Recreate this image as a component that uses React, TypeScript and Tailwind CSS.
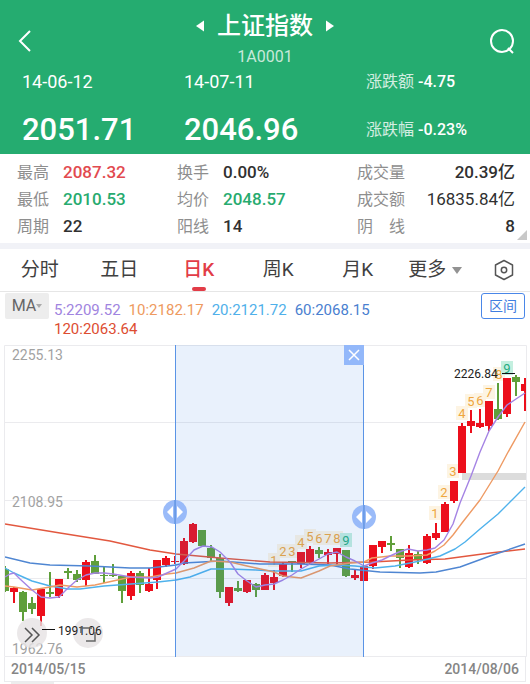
type Candle = [color: "r" | "g", high: number, top: number, bottom: number, low: number];
type Point = [x: number, y: number];

const STEP = 8.97;
const RED = "#ec0f1c";
const GREEN = "#5f9f3a";

const candles: Candle[] = [
  ["g", 566, 569, 591, 592], ["r", 587, 588, 592, 603], ["g", 591, 592, 612, 621],
  ["g", 597, 603, 609, 614], ["r", 589, 589, 616, 626], ["g", 572, 592, 594, 597],
  ["r", 579, 579, 596, 598], ["g", 568, 571, 573, 579], ["g", 570, 574, 580, 582],
  ["r", 560, 562, 580, 586], ["g", 555, 561, 574, 574], ["g", 566, 575, 576, 583],
  ["g", 564, 575, 576, 577], ["g", 575, 576, 591, 603], ["r", 571, 573, 596, 600],
  ["g", 571, 573, 585, 593], ["r", 568, 584, 591, 592], ["r", 560, 560, 580, 589],
  ["r", 556, 558, 565, 567], ["r", 556, 561, 562, 564], ["r", 538, 541, 564, 565],
  ["r", 523, 524, 542, 543], ["g", 530, 530, 546, 547], ["g", 545, 548, 558, 561],
  ["g", 554, 558, 592, 598], ["r", 587, 587, 603, 606], ["g", 581, 588, 591, 592],
  ["r", 580, 580, 592, 593], ["g", 583, 584, 590, 597], ["r", 573, 575, 590, 590],
  ["r", 570, 577, 583, 590], ["r", 562, 564, 576, 577], ["g", 561, 561, 562, 572],
  ["r", 552, 552, 564, 568], ["r", 546, 549, 562, 565], ["g", 547, 550, 554, 558],
  ["r", 549, 552, 555, 564], ["r", 548, 548, 554, 567], ["g", 550, 550, 576, 577],
  ["r", 569, 575, 578, 580], ["r", 566, 566, 581, 581], ["r", 545, 545, 566, 569],
  ["r", 541, 541, 547, 553], ["g", 536, 543, 545, 551], ["g", 549, 549, 558, 568],
  ["r", 545, 553, 567, 568], ["g", 551, 554, 560, 564], ["r", 534, 536, 563, 564],
  ["r", 523, 533, 538, 540], ["r", 502, 504, 532, 532], ["r", 481, 481, 501, 503],
  ["r", 423, 426, 473, 473], ["r", 410, 421, 426, 433], ["r", 409, 423, 427, 428],
  ["r", 401, 401, 426, 431], ["g", 383, 409, 419, 420], ["r", 378, 378, 414, 417],
  ["g", 375, 377, 382, 396], ["r", 378, 384, 391, 411],
];

const averages: { label: string; color: string; text: string; points: Point[] }[] = [
  {
    label: "120:2063.64",
    color: "#e2583f",
    text: "text-[#dd4d31]",
    points: [[5, 524], [60, 533], [110, 541], [150, 550], [176, 554], [220, 558], [270, 562], [330, 563], [372, 562], [410, 560], [445, 559], [490, 553], [525, 549]],
  },
  {
    label: "60:2068.15",
    color: "#4f86d2",
    text: "text-[#4a80d0]",
    points: [[5, 557], [30, 563], [50, 565], [90, 566], [130, 568], [150, 568], [176, 565], [184, 563], [220, 561], [260, 564], [300, 564], [330, 565], [350, 569], [380, 572], [420, 573], [436, 572], [460, 567], [490, 556], [525, 544]],
  },
  {
    label: "20:2121.72",
    color: "#4fb2ec",
    text: "text-[#4fb0ea]",
    points: [[5, 568], [14, 573], [32, 581], [50, 586], [68, 589], [80, 589], [104, 586], [131, 584], [158, 582], [176, 580], [190, 577], [211, 569], [230, 569], [256, 570], [274, 571], [301, 571], [319, 566], [337, 565], [355, 566], [375, 568], [395, 566], [420, 561], [440, 556], [455, 549], [465, 542], [480, 529], [498, 514], [512, 500], [525, 487]],
  },
  {
    label: "10:2182.17",
    color: "#ee9a63",
    text: "text-[#ee9a60]",
    points: [[5, 586], [14, 587], [32, 590], [50, 587], [60, 585], [77, 587], [95, 585], [113, 581], [122, 579], [131, 577], [150, 577], [167, 574], [176, 573], [194, 568], [211, 561], [230, 562], [247, 566], [256, 568], [274, 572], [283, 576], [301, 578], [319, 571], [330, 566], [350, 563], [364, 562], [372, 558], [390, 556], [408, 556], [427, 555], [435, 551], [444, 545], [453, 535], [462, 523], [480, 500], [498, 471], [507, 454], [525, 422]],
  },
  {
    label: "5:2209.52",
    color: "#a584e4",
    text: "text-[#a084e0]",
    points: [[5, 577], [10, 574], [14, 573], [20, 579], [32, 590], [41, 597], [50, 598], [59, 597], [68, 588], [77, 580], [86, 575], [95, 573], [104, 573], [113, 574], [131, 577], [150, 578], [158, 577], [167, 573], [176, 569], [184, 561], [194, 550], [203, 546], [212, 547], [220, 552], [230, 562], [238, 574], [247, 581], [256, 587], [265, 585], [274, 584], [283, 580], [292, 575], [301, 569], [310, 564], [319, 559], [328, 554], [337, 552], [346, 557], [355, 561], [364, 566], [372, 563], [382, 560], [390, 556], [399, 552], [408, 549], [418, 551], [427, 550], [435, 548], [444, 540], [453, 524], [460, 503], [471, 476], [480, 452], [489, 431], [498, 417], [507, 405], [516, 399], [525, 393]],
  },
];

// nine-turn counts, one list per run
const turns: Point[][] = [
  [[274, 560], [283, 551], [292, 551], [301, 542], [310, 536], [319, 538], [328, 538], [337, 538], [346, 540]],
  [[435, 513], [444, 492], [453, 471], [462, 413], [471, 401], [480, 400], [489, 392], [499, 374], [507, 368]],
];

const stats = [
  [
    { label: "最高", value: "2087.32", tone: "font-medium text-[#e24a4f]" },
    { label: "最低", value: "2010.53", tone: "font-medium text-[#27ab6f]" },
    { label: "周期", value: "22", tone: "font-medium text-[#303030]" },
  ],
  [
    { label: "换手", value: "0.00%", tone: "font-medium text-[#303030]" },
    { label: "均价", value: "2048.57", tone: "font-medium text-[#27ab6f]" },
    { label: "阳线", value: "14", tone: "font-medium text-[#303030]" },
  ],
  [
    { label: "成交量", value: "20.39亿", tone: "font-medium text-[#303030]" },
    { label: "成交额", value: "16835.84亿", tone: "text-[#303030]" },
    { label: "阴　线", value: "8", tone: "font-medium text-[#303030]" },
  ],
];

const tabs = ["分时", "五日", "日K", "周K", "月K"];

function Header() {
  return (
    <header className="bg-[#25ac70] pb-1 text-white">
      <div className="grid grid-cols-[48px_1fr_48px] items-center pt-[10px]">
        <button type="button" aria-label="返回" className="flex h-[62px] items-center pl-[18px]">
          <svg width="14" height="22" viewBox="0 0 14 22" fill="none" stroke="currentColor" strokeWidth="2">
            <path d="M12 1 2 11l10 10" />
          </svg>
        </button>
        <div className="flex flex-col items-center">
          <div className="flex items-center gap-3">
            <button type="button" aria-label="上一个">
              <svg width="9" height="12" viewBox="0 0 9 12" fill="currentColor"><path d="M8 .5v11L0 6z" /></svg>
            </button>
            <h1 className="text-2xl leading-8 font-medium">上证指数</h1>
            <button type="button" aria-label="下一个">
              <svg width="9" height="12" viewBox="0 0 9 12" fill="currentColor"><path d="M1 .5v11L9 6z" /></svg>
            </button>
          </div>
          <p className="text-base leading-[30px] text-white/75">1A0001</p>
        </div>
        <button type="button" aria-label="搜索" className="flex h-[62px] items-center pl-[7px]">
          <svg width="26" height="26" viewBox="0 0 26 26" fill="none" stroke="currentColor" strokeWidth="2">
            <circle cx="13" cy="13" r="11" />
            <path d="m19 20 5 5" />
          </svg>
        </button>
      </div>
      <div className="grid grid-cols-[162px_182px_1fr] pl-[22px]">
        <div>
          <p className="text-lg leading-5">14-06-12</p>
          <p className="pt-[18px] text-[31px] leading-10 font-medium">2051.71</p>
        </div>
        <div>
          <p className="text-lg leading-5">14-07-11</p>
          <p className="pt-[18px] text-[31px] leading-10 font-medium">2046.96</p>
        </div>
        <div className="text-base">
          <p className="leading-5">
            <span className="text-white/80">涨跌额</span> <span className="font-medium">-4.75</span>
          </p>
          <p className="pt-[18px] leading-10">
            <span className="text-white/80">涨跌幅</span> <span className="font-medium">-0.23%</span>
          </p>
        </div>
      </div>
    </header>
  );
}

function Stats() {
  return (
    <section className="relative grid grid-cols-[160px_180px_1fr] border-b-6 border-[#f1f2f7] pt-[5px] pr-[15px] pb-[3px] pl-[17px]">
      {stats.map((column, i) => (
        <dl key={i}>
          {column.map((item) => (
            <div key={item.label} className={i === 2 ? "flex justify-between" : "flex gap-[14px]"}>
              <dt className="text-base leading-[27px] text-[#8e8e8e]">{item.label}</dt>
              <dd className={`text-[17px] leading-[27px] ${item.tone}`}>{item.value}</dd>
            </div>
          ))}
        </dl>
      ))}
      <svg className="absolute right-[3px] bottom-[3px]" width="10" height="10" viewBox="0 0 10 10">
        <path d="M10 0v10H0z" fill="#c8c8c8" />
      </svg>
    </section>
  );
}

function Tabs() {
  return (
    <nav className="grid grid-cols-[3fr_3fr_3fr_3fr_3fr_3fr_2fr] border-b border-[#e6e6e6] text-[19px] text-[#404040]">
      {tabs.map((tab) => (
        <button
          key={tab}
          type="button"
          className={`relative h-[42px] ${tab === "日K" ? "font-medium text-[#e23c47]" : ""}`}
        >
          {tab}
          {tab === "日K" && (
            <span className="absolute bottom-0 left-1/2 h-1 w-[14px] -translate-x-1/2 rounded-full bg-[#e23c47]" />
          )}
        </button>
      ))}
      <button type="button" className="flex h-[42px] items-center justify-center gap-1.5 pr-1">
        更多
        <svg width="10" height="7" viewBox="0 0 10 7" fill="#929292"><path d="M0 0h10L5 7z" /></svg>
      </button>
      <button type="button" aria-label="设置" className="flex items-center justify-center">
        <svg width="20" height="22" viewBox="0 0 20 22" fill="none" stroke="#555" strokeWidth="1.5" strokeLinejoin="round">
          <path d="M10 1.5 18.5 6v10L10 20.5 1.5 16V6z" />
          <circle cx="10" cy="11" r="2.7" />
        </svg>
      </button>
    </nav>
  );
}

function Indicators() {
  return (
    <div className="flex items-start gap-[5px] px-[5px] pt-px pb-[6px]">
      <button type="button" className="flex h-[26px] w-11 shrink-0 items-center justify-center rounded-xs bg-[#ededed] text-base text-[#666]">
        MA
        <svg width="6" height="4" viewBox="0 0 6 4" fill="#aaa"><path d="M0 0h6L3 4z" /></svg>
      </button>
      <div className="mr-10 flex flex-1 flex-wrap gap-x-2 pt-2 text-[15px] leading-[19px]">
        {[...averages].reverse().map((line) => (
          <span key={line.label} className={line.text}>{line.label}</span>
        ))}
      </div>
      <button type="button" className="h-[26px] w-11 shrink-0 rounded-[3px] border border-[#4a87e8] text-sm text-[#3f7de0]">
        区间
      </button>
    </div>
  );
}

function RangeHandle({ className, label }: { className: string; label: string }) {
  return (
    <button type="button" aria-label={label} className={`absolute size-6 -translate-1/2 rounded-full bg-[#8fb4f8]/90 ${className}`}>
      <svg viewBox="0 0 24 24" fill="#fff">
        <path d="M10 6v12l-6-6zM14 6v12l6-6z" />
        <path d="M12 0v24" stroke="#4c86d8" />
      </svg>
    </button>
  );
}

function Chart() {
  return (
    <div className="relative">
      <svg viewBox="0 345 530 312" className="block w-full">
        <path d="M4.5 345.5h522v311h-522zM5 422.5h521M5 500.5h521M5 578.5h521" stroke="#ebebee" fill="none" />
        <path d="M462 473h64v7h-64z" fill="#dcdcdc" />
        <g fontSize="14" fill="#a2a2a2">
          <text x="12" y="360">2255.13</text>
          <text x="12" y="507">2108.95</text>
          <text x="12" y="654">1962.76</text>
        </g>
        <clipPath id="plot"><path d="M5 345h521v312H5z" /></clipPath>
        <g clipPath="url(#plot)">
          {turns.map((run, r) =>
            run.map(([x, y], i) => (
              <g key={`${r}-${i}`}>
                <rect x={x - 6} y={y - 7} width="12" height="14" fill={i === 8 ? "#c4efdf" : "#fdf4e3"} />
                <text x={x} y={y + 5} fontSize="13" textAnchor="middle" fill={i === 8 ? "#25ac80" : "#efa63e"}>
                  {i + 1}
                </text>
              </g>
            )),
          )}
          {candles.map(([color, high, top, bottom, low], i) => {
            const x = Math.round(5 + i * STEP);
            return (
              <g key={i} fill={color === "r" ? RED : GREEN}>
                <rect x={x - 1} y={high} width="2" height={low - high} />
                <rect x={x - 4} y={top} width="8" height={bottom - top} />
              </g>
            );
          })}
          {averages.map((line) => (
            <polyline
              key={line.label}
              points={line.points.map((p) => p.join(",")).join(" ")}
              fill="none"
              stroke={line.color}
              strokeWidth="1.4"
              strokeLinejoin="round"
            />
          ))}
        </g>
        <rect x="175" y="345" width="189" height="311" fill="#3b7ce6" fillOpacity="0.11" />
        <g fill="#5a94e6">
          <rect x="175" y="345" width="1" height="312" />
          <rect x="363" y="345" width="1" height="312" />
        </g>
        <g fill="#e6e2e4" fillOpacity="0.8">
          <circle cx="32" cy="633" r="15" />
          <circle cx="88" cy="633" r="15" />
        </g>
        <path d="M42 629.5h13M502 373.5h13" fill="none" stroke="#111" />
        <g fontSize="12" fill="#222">
          <text x="58" y="635">1991.06</text>
          <text x="454" y="378">2226.84</text>
        </g>
      </svg>
      <button type="button" aria-label="关闭区间" className="absolute top-0 right-[31.4%] size-5 bg-[#93b8fa]">
        <svg viewBox="0 0 20 20" stroke="#fff" strokeWidth="1.5"><path d="m5 5 10 10M15 5 5 15" /></svg>
      </button>
      <RangeHandle label="区间起点" className="top-[53.5%] left-[33.1%]" />
      <RangeHandle label="区间终点" className="top-[55%] left-[68.6%]" />
      <button type="button" aria-label="展开" className="absolute bottom-2 left-[17px] size-[30px]">
        <svg viewBox="0 0 30 30" fill="none" stroke="#555" strokeWidth="1.5"><path d="m8 9 7 7-7 7M15 9l7 7-7 7" /></svg>
      </button>
      <button type="button" aria-label="横屏" className="absolute bottom-2 left-[73px] size-[30px]">
        <svg viewBox="0 0 30 30" fill="none" stroke="#666" strokeWidth="1.5"><path d="M8 14V9h11M22 13v9h-9" /></svg>
      </button>
    </div>
  );
}

export default function App() {
  return (
    <main className="bg-white font-[Roboto,'Noto_Sans_CJK_SC',sans-serif]">
      <Header />
      <Stats />
      <Tabs />
      <Indicators />
      <Chart />
      <div className="mx-1 flex justify-between border-x border-b border-[#ebebee] px-[6px] text-sm leading-6 font-medium text-[#858585]">
        <time dateTime="2014-05-15">2014/05/15</time>
        <time dateTime="2014-08-06">2014/08/06</time>
      </div>
      {/* top edge of the volume panel's selector */}
      <div className="ml-[11px] h-0.5 w-[43px] bg-[#ededed]" />
    </main>
  );
}
